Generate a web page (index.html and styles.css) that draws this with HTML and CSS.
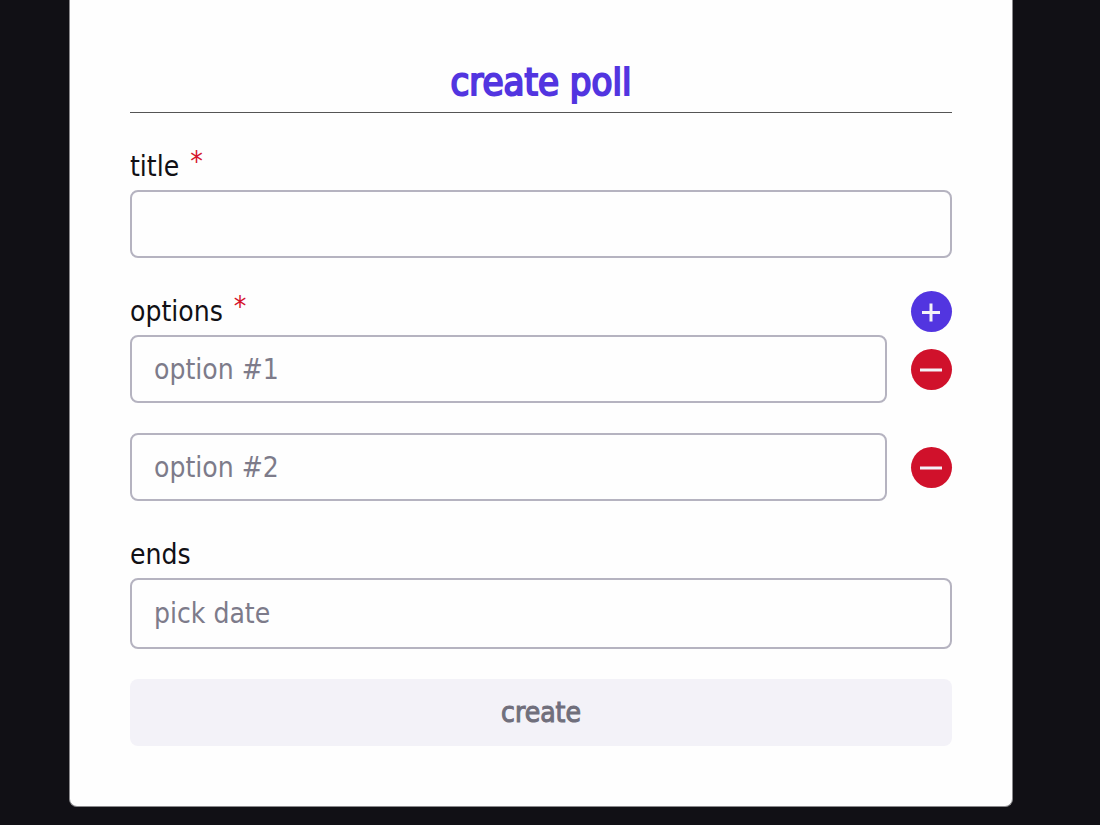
FILE: index.html
```
<!DOCTYPE html>
<html lang="en">
<head>
    <meta charset="UTF-8">
    <meta name="viewport" content="width=device-width, initial-scale=1.0">
    <title>create poll</title>
    <link rel="stylesheet" href="styles.css">
</head>
<body>
    <main class="card">
        <h1>create poll</h1>

        <form class="poll-form">
            <div class="field">
                <div class="label-row">
                    <label for="title">title <span class="required">*</span></label>
                </div>
                <input type="text" id="title" required>
            </div>

            <div class="field">
                <div class="label-row">
                    <label for="option1">options <span class="required">*</span></label>
                    <button type="button" class="round-btn add-btn" aria-label="add option">
                        <svg viewBox="0 0 41 41"><path d="M11 21.5h18M20 12.5v18"/></svg>
                    </button>
                </div>
                <div class="options">
                    <div class="option">
                        <input type="text" id="option1" placeholder="option #1" required>
                        <button type="button" class="round-btn remove-btn" aria-label="remove option 1">
                            <svg viewBox="0 0 41 41"><path d="M9 21h22"/></svg>
                        </button>
                    </div>
                    <div class="option">
                        <input type="text" id="option2" aria-label="option 2" placeholder="option #2" required>
                        <button type="button" class="round-btn remove-btn" aria-label="remove option 2">
                            <svg viewBox="0 0 41 41"><path d="M9 21h22"/></svg>
                        </button>
                    </div>
                </div>
            </div>

            <div class="field">
                <div class="label-row">
                    <label for="ends">ends</label>
                </div>
                <input type="text" id="ends" class="date-input" placeholder="pick date">
            </div>

            <button type="submit" class="create-btn" disabled>create</button>
        </form>
    </main>
</body>
</html>
```

FILE: styles.css
```
* {
    margin: 0;
    padding: 0;
    box-sizing: border-box;
}

body {
    font-family: "DejaVu Sans Condensed", "Noto Sans", sans-serif;
    font-size: 28px;
    color: #111015;
    background-color: #111015;
}

.card {
    margin: 0 87px 18px 69px;
    padding: 52px 60px 60px;
    background-color: #fefefe;
    border: 1px solid #8a898c;
    border-top: none;
    border-radius: 0 0 8px 8px;
}

h1 {
    font-size: 38px;
    line-height: 60px;
    font-weight: 400;
    -webkit-text-stroke: 2px;
    text-align: center;
    color: #5235e0;
    border-bottom: 1px solid #555;
}

.field {
    padding-top: 33px;
}

.label-row {
    display: flex;
    justify-content: space-between;
    align-items: center;
    height: 41px;
    margin-bottom: 3px;
}

.required {
    margin-left: 3px;
    line-height: 0;
    vertical-align: 5px;
    color: #d5142c;
}

input {
    width: 100%;
    height: 68px;
    padding: 0 22px;
    font: inherit;
    color: inherit;
    background-color: #fefefe;
    border: 2px solid #b5b3c0;
    border-radius: 8px;
}

input::placeholder {
    color: #7d7b8a;
    opacity: 1;
}

.date-input {
    height: 71px;
}

.options {
    display: flex;
    flex-direction: column;
    gap: 30px;
}

.option {
    display: flex;
    align-items: center;
    gap: 24px;
}

.option input {
    flex: 1;
    min-width: 0;
}

button {
    border: none;
    font: inherit;
    cursor: pointer;
}

.round-btn {
    flex: none;
    width: 41px;
    height: 41px;
    border-radius: 50%;
}

.round-btn svg {
    display: block;
    fill: none;
    stroke: #f3f2f8;
    stroke-width: 3;
}

.add-btn {
    background-color: #5235e0;
}

.remove-btn {
    background-color: #d0112b;
}

.create-btn {
    display: block;
    width: 100%;
    height: 67px;
    margin-top: 30px;
    -webkit-text-stroke: 1px;
    color: #706f7c;
    background-color: #f3f2f8;
    border-radius: 8px;
}

.create-btn:disabled {
    cursor: not-allowed;
}
```
